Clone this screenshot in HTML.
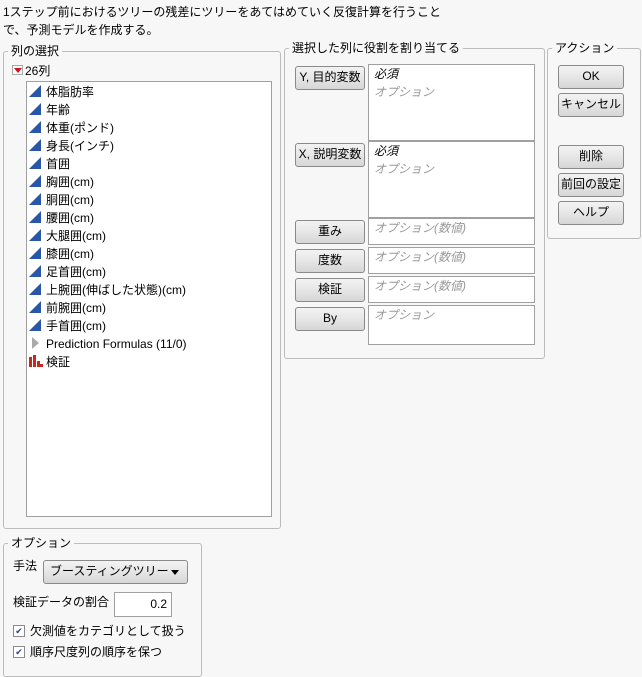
<!DOCTYPE html>
<html><head><meta charset="utf-8"><style>
*{box-sizing:border-box;margin:0;padding:0}
body{width:642px;height:677px;background:#f7f7f7;font-family:"Liberation Sans","Noto Sans CJK JP",sans-serif;font-size:12px;color:#000;position:relative;overflow:hidden}
.a{position:absolute;white-space:nowrap;line-height:14px}
.g{position:absolute;border:1px solid #bcbcbc;border-radius:3px}
.lg{position:absolute;background:#f7f7f7;padding:0 3px;line-height:14px;top:-8px}
.box{position:absolute;background:#fff;border:1px solid #a0a0a0}
.btn{position:absolute;border:1px solid #8a8a8a;border-radius:3px;background:linear-gradient(#f3f3f3,#e6e6e6 50%,#d6d6d6);text-align:center;line-height:20px;font-size:12px}
.ph{color:#9a9a9a;font-style:italic;position:absolute;left:5px;line-height:14px}
.rq{font-style:italic;position:absolute;left:5px;top:2px;line-height:14px}
.it{position:absolute;left:2px;height:18px;line-height:18px}
.tri{display:inline-block;width:0;height:0;border-left:12px solid transparent;border-bottom:12px solid #2a56a8;vertical-align:-1px;margin-right:5px}
.cb{position:absolute;width:12px;height:12px;border:1px solid #8a8a8a;background:#fff;font-size:9px;line-height:10px;text-align:center;color:#2a3d8a}
</style></head><body>
<div class="a" style="left:3px;top:5px">1ステップ前におけるツリーの残差にツリーをあてはめていく反復計算を行うこと</div>
<div class="a" style="left:3px;top:23px">で、予測モデルを作成する。</div>

<div class="g" style="left:3px;top:51px;width:278px;height:478px">
  <div class="lg" style="left:4px">列の選択</div>
</div>
<div style="position:absolute;left:12px;top:65px;width:11px;height:10px;border:1px solid #aaa;background:#fff"><div style="position:absolute;left:1px;top:2px;border-left:4px solid transparent;border-right:4px solid transparent;border-top:5px solid #d0101a"></div></div>
<div class="a" style="left:25px;top:64px">26列</div>
<div class="box" style="left:26px;top:81px;width:246px;height:436px">
  <div class="it" style="top:1px"><span class="tri"></span>体脂肪率</div>
  <div class="it" style="top:19px"><span class="tri"></span>年齢</div>
  <div class="it" style="top:37px"><span class="tri"></span>体重(ポンド)</div>
  <div class="it" style="top:55px"><span class="tri"></span>身長(インチ)</div>
  <div class="it" style="top:73px"><span class="tri"></span>首囲</div>
  <div class="it" style="top:91px"><span class="tri"></span>胸囲(cm)</div>
  <div class="it" style="top:109px"><span class="tri"></span>胴囲(cm)</div>
  <div class="it" style="top:127px"><span class="tri"></span>腰囲(cm)</div>
  <div class="it" style="top:145px"><span class="tri"></span>大腿囲(cm)</div>
  <div class="it" style="top:163px"><span class="tri"></span>膝囲(cm)</div>
  <div class="it" style="top:181px"><span class="tri"></span>足首囲(cm)</div>
  <div class="it" style="top:199px"><span class="tri"></span>上腕囲(伸ばした状態)(cm)</div>
  <div class="it" style="top:217px"><span class="tri"></span>前腕囲(cm)</div>
  <div class="it" style="top:235px"><span class="tri"></span>手首囲(cm)</div>
  <div class="it" style="top:253px"><span style="display:inline-block;width:0;height:0;border-top:6px solid transparent;border-bottom:6px solid transparent;border-left:7px solid #aaa;margin:0 7px 0 3px;vertical-align:-1px"></span>Prediction Formulas (11/0)</div>
  <div class="it" style="top:271px"><svg width="14" height="12" style="vertical-align:-1px;margin-right:3px"><rect x="0" y="2" width="3" height="10" fill="#c8281e"/><rect x="4" y="0" width="3" height="12" fill="#c8281e"/><rect x="8" y="6" width="3" height="6" fill="#c8281e"/><rect x="11" y="9" width="3" height="3" fill="#c8281e"/></svg>検証</div>
</div>

<div class="g" style="left:284px;top:48px;width:261px;height:311px">
  <div class="lg" style="left:4px">選択した列に役割を割り当てる</div>
</div>
<div class="btn" style="left:295px;top:66px;width:70px;height:24px">Y, 目的変数</div>
<div class="box" style="left:368px;top:64px;width:167px;height:77px"><div class="rq">必須</div><div class="ph" style="top:20px">オプション</div></div>
<div class="btn" style="left:295px;top:143px;width:70px;height:24px">X, 説明変数</div>
<div class="box" style="left:368px;top:141px;width:167px;height:77px"><div class="rq">必須</div><div class="ph" style="top:20px">オプション</div></div>
<div class="btn" style="left:295px;top:220px;width:70px;height:24px">重み</div>
<div class="box" style="left:368px;top:218px;width:167px;height:27px"><div class="ph" style="top:2px">オプション(数値)</div></div>
<div class="btn" style="left:295px;top:249px;width:70px;height:24px">度数</div>
<div class="box" style="left:368px;top:247px;width:167px;height:27px"><div class="ph" style="top:2px">オプション(数値)</div></div>
<div class="btn" style="left:295px;top:278px;width:70px;height:24px">検証</div>
<div class="box" style="left:368px;top:276px;width:167px;height:27px"><div class="ph" style="top:2px">オプション(数値)</div></div>
<div class="btn" style="left:295px;top:307px;width:70px;height:24px">By</div>
<div class="box" style="left:368px;top:305px;width:167px;height:40px"><div class="ph" style="top:2px">オプション</div></div>

<div class="g" style="left:547px;top:48px;width:94px;height:191px">
  <div class="lg" style="left:4px">アクション</div>
</div>
<div class="btn" style="left:558px;top:65px;width:66px;height:24px">OK</div>
<div class="btn" style="left:558px;top:93px;width:66px;height:24px">キャンセル</div>
<div class="btn" style="left:558px;top:145px;width:66px;height:24px">削除</div>
<div class="btn" style="left:558px;top:173px;width:66px;height:24px">前回の設定</div>
<div class="btn" style="left:558px;top:201px;width:66px;height:24px">ヘルプ</div>

<div class="g" style="left:3px;top:543px;width:199px;height:134px">
  <div class="lg" style="left:4px">オプション</div>
</div>
<div class="a" style="left:13px;top:559px">手法</div>
<div class="btn" style="left:43px;top:560px;width:145px;height:24px;text-align:left;padding-left:6px">ブースティングツリー<span style="position:absolute;right:8px;top:9px;border-left:4px solid transparent;border-right:4px solid transparent;border-top:5px solid #000"></span></div>
<div class="a" style="left:13px;top:595px">検証データの割合</div>
<div class="box" style="left:114px;top:592px;width:58px;height:25px;text-align:right;padding:4px 4px 0 0;line-height:14px">0.2</div>
<div class="cb" style="left:13px;top:625px">✔</div>
<div class="a" style="left:30px;top:624px">欠測値をカテゴリとして扱う</div>
<div class="cb" style="left:13px;top:646px">✔</div>
<div class="a" style="left:30px;top:645px">順序尺度列の順序を保つ</div>
</body></html>
